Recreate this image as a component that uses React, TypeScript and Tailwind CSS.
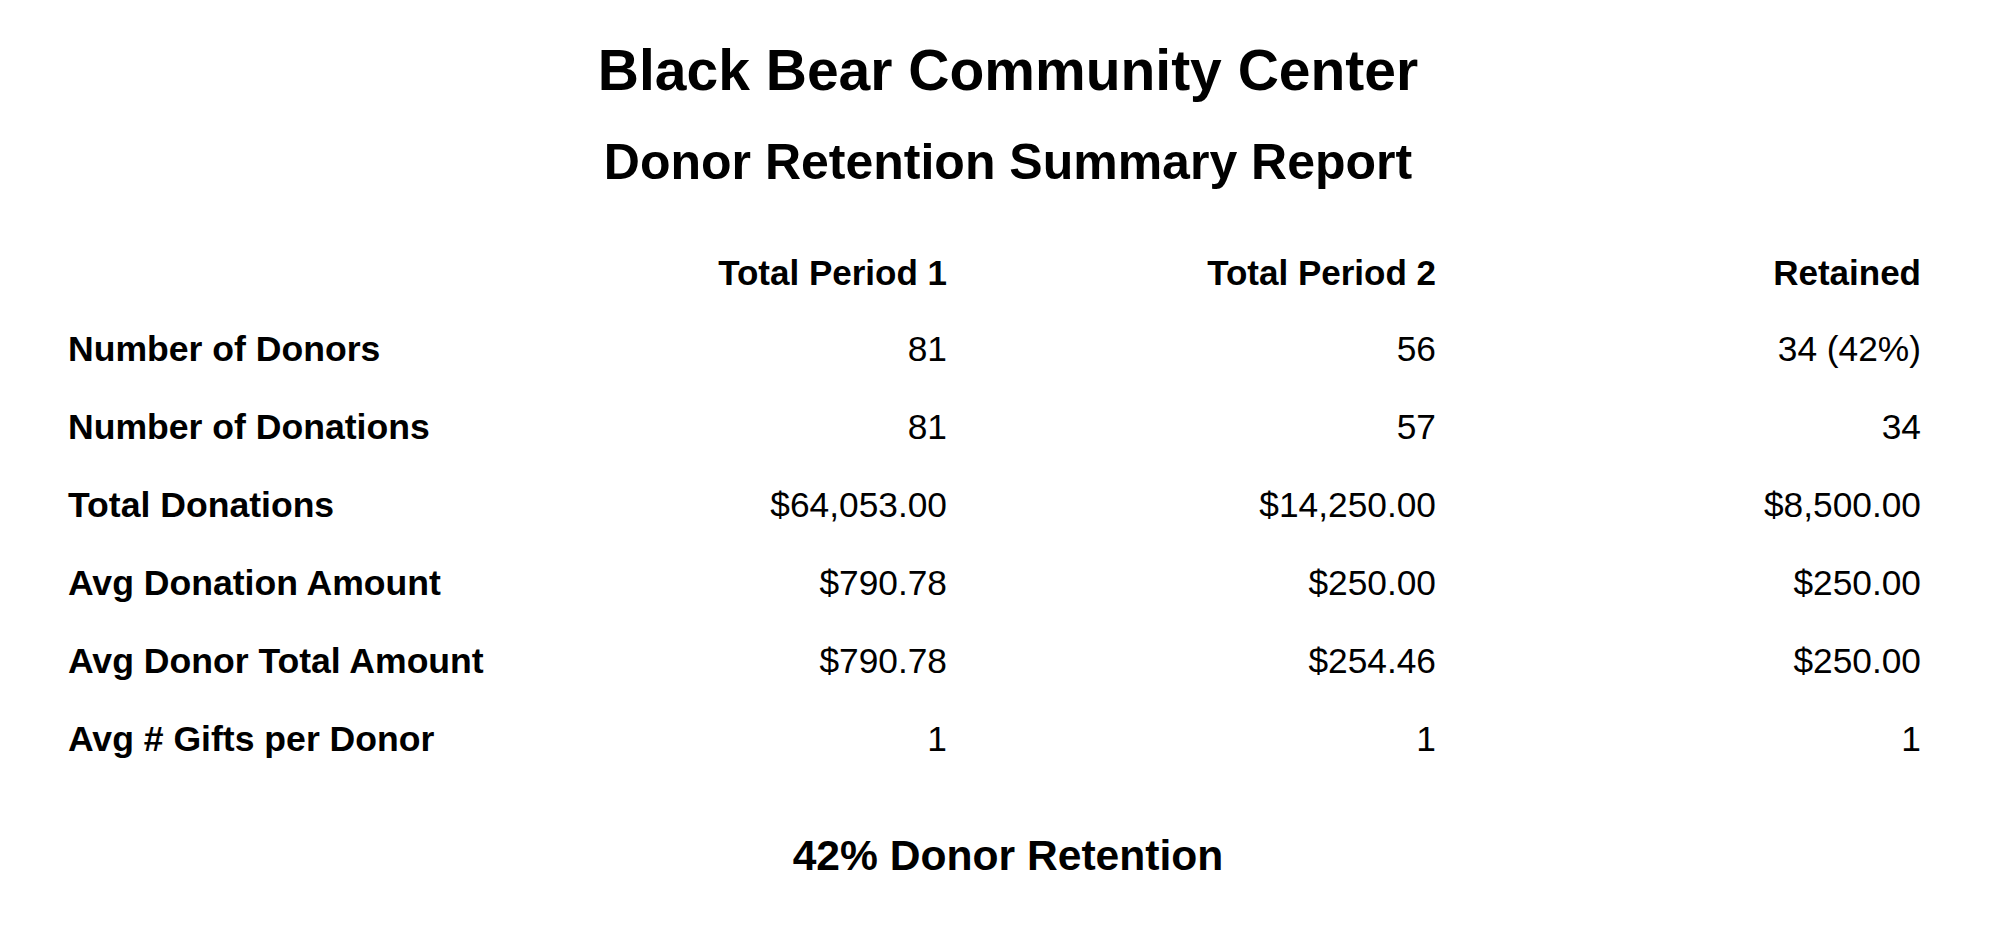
const rows = [
  { label: "Number of Donors", p1: "81", p2: "56", kept: "34 (42%)" },
  { label: "Number of Donations", p1: "81", p2: "57", kept: "34" },
  { label: "Total Donations", p1: "$64,053.00", p2: "$14,250.00", kept: "$8,500.00" },
  { label: "Avg Donation Amount", p1: "$790.78", p2: "$250.00", kept: "$250.00" },
  { label: "Avg Donor Total Amount", p1: "$790.78", p2: "$254.46", kept: "$250.00" },
  { label: "Avg # Gifts per Donor", p1: "1", p2: "1", kept: "1" },
];

export default function App() {
  return (
    <div className="min-h-screen bg-white text-black font-['Liberation_Sans',Arial,sans-serif] pt-[35px]">
      <div className="pl-[16px] text-center font-bold">
        <h1 className="text-[57px] leading-[70px]">Black Bear Community Center</h1>
        <h2 className="mt-[22px] text-[50px] leading-[70px]">Donor Retention Summary Report</h2>
      </div>

      <div className="mt-[39px] pl-[68px] pr-[79px]">
        <div className="grid grid-cols-[440px_439px_489px_485px] text-[35px] font-bold leading-[74px]">
          <div></div>
          <div className="text-right">Total Period 1</div>
          <div className="text-right">Total Period 2</div>
          <div className="text-right">Retained</div>
        </div>
        {rows.map((row, i) => {
          return (
            <div className="grid grid-cols-[440px_439px_489px_485px] text-[35.3px] leading-[78px]" key={i}>
              <div className="font-bold whitespace-nowrap text-[35.6px]">{row.label}</div>
              <div className="text-right">{row.p1}</div>
              <div className="text-right">{row.p2}</div>
              <div className="text-right">{row.kept}</div>
            </div>
          );
        })}
      </div>

      <div className="mt-[47px] pl-[16px] text-center text-[42.6px] font-bold leading-[60px]">
        42% Donor Retention
      </div>
    </div>
  );
}
